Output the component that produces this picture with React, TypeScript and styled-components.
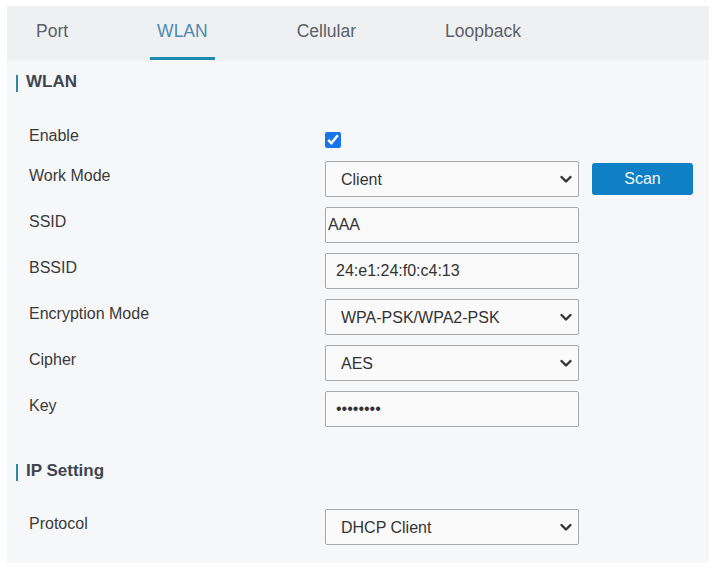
import styled, { createGlobalStyle } from 'styled-components'

const GlobalStyle = createGlobalStyle`
  body {
    margin: 0;
    background: #ffffff;
    font-family: "Liberation Sans", Arial, sans-serif;
  }
`

function Chevron() {
  return (
    <ChevronIcon width="14" height="9" viewBox="0 0 14 9">
      <path d="M2.5 2 L7 6.5 L11.5 2" fill="none" stroke="#333" strokeWidth="2.4" strokeLinecap="round" strokeLinejoin="round" />
    </ChevronIcon>
  )
}

function SelectField({ value }: { value: string }) {
  return (
    <SelectWrap>
      <Select defaultValue={value}>
        <option>{value}</option>
      </Select>
      <Chevron />
    </SelectWrap>
  )
}

const tabs = ['Port', 'WLAN', 'Cellular', 'Loopback']

export default function App() {
  return (
    <>
      <GlobalStyle />
      <Panel>
        {/* Tabs */}
        <TabBar>
          {tabs.map((t) => (
            <Tab key={t} active={t === 'WLAN'}>
              {t}
            </Tab>
          ))}
        </TabBar>

        {/* WLAN section */}
        <SectionTitle>WLAN</SectionTitle>
        <Form>
          <CheckRow>
            <Label>Enable</Label>
            <Checkbox type="checkbox" defaultChecked />
          </CheckRow>
          <Row>
            <Label>Work Mode</Label>
            <SelectField value="Client" />
            <ScanButton>Scan</ScanButton>
          </Row>
          <Row>
            <Label>SSID</Label>
            <Input defaultValue="AAA" tight />
          </Row>
          <Row>
            <Label>BSSID</Label>
            <Input defaultValue="24:e1:24:f0:c4:13" />
          </Row>
          <Row>
            <Label>Encryption Mode</Label>
            <SelectField value="WPA-PSK/WPA2-PSK" />
          </Row>
          <Row>
            <Label>Cipher</Label>
            <SelectField value="AES" />
          </Row>
          <Row>
            <Label>Key</Label>
            <Input type="password" defaultValue="12345678" />
          </Row>
        </Form>

        {/* IP Setting section */}
        <SectionTitle second>IP Setting</SectionTitle>
        <Form second>
          <Row>
            <Label>Protocol</Label>
            <SelectField value="DHCP Client" />
          </Row>
        </Form>
      </Panel>
    </>
  )
}

const Panel = styled.div`
  margin: 6px 0 0 7px;
  width: 702px;
  height: 557px;
  background: #f6f7f8;
  box-sizing: border-box;
`

const TabBar = styled.div`
  display: flex;
  gap: 75px;
  height: 54px;
  padding-left: 22px;
  background: #eef0f2;
`

const Tab = styled.div<{ active?: boolean }>`
  display: flex;
  align-items: center;
  box-sizing: border-box;
  height: 54px;
  padding: 0 7px 1px;
  border-bottom: 3px solid ${(p) => (p.active ? '#1f8aae' : 'transparent')};
  font-size: 17.5px;
  color: ${(p) => (p.active ? '#4d8bb1' : '#5b6168')};
`

const SectionTitle = styled.h2<{ second?: boolean }>`
  display: flex;
  align-items: center;
  gap: 8px;
  margin: ${(p) => (p.second ? '34px' : '12px')} 0 0 9px;
  font-size: 17px;
  line-height: 20px;
  font-weight: 700;
  color: #3d4650;

  &::before {
    content: '';
    width: 2px;
    height: 17px;
    margin-top: 2px;
    background: #2a8aa6;
  }
`

const Form = styled.div<{ second?: boolean }>`
  display: flex;
  flex-direction: column;
  gap: 10px;
  margin-top: ${(p) => (p.second ? '28px' : '29px')};
  padding-left: 22px;
`

const Row = styled.div`
  display: flex;
  align-items: center;
  height: 36px;
`

const CheckRow = styled.div`
  display: flex;
  align-items: flex-start;
  height: 30px;
`

const Label = styled.div`
  align-self: flex-start;
  width: 296px;
  padding-top: 5px;
  font-size: 16px;
  line-height: 20px;
  color: #3a3a3a;
`

const Checkbox = styled.input`
  width: 16px;
  height: 16px;
  margin: 11px 0 0 0;
  accent-color: #1a73e8;
`

const fieldBase = `
  box-sizing: border-box;
  width: 254px;
  height: 36px;
  border: 1px solid #a9a9a9;
  border-radius: 2px;
  background: #fafafa;
  font-family: "Liberation Sans", Arial, sans-serif;
  font-size: 16px;
  color: #333;
  outline: none;
`

const Input = styled.input<{ tight?: boolean }>`
  ${fieldBase}
  padding: 0 0 0 ${(p) => (p.tight ? '2px' : '10px')};
`

const SelectWrap = styled.div`
  position: relative;
  width: 254px;
  height: 36px;
`

const Select = styled.select`
  ${fieldBase}
  appearance: none;
  padding: 0 0 0 15px;
`

const ChevronIcon = styled.svg`
  position: absolute;
  right: 6px;
  top: 14px;
  pointer-events: none;
`

const ScanButton = styled.button`
  width: 101px;
  height: 32px;
  margin-left: 13px;
  border: none;
  border-radius: 3px;
  background: #0f7fc6;
  color: #f4f8fb;
  font-family: "Liberation Sans", Arial, sans-serif;
  font-size: 16px;
  cursor: pointer;
`
